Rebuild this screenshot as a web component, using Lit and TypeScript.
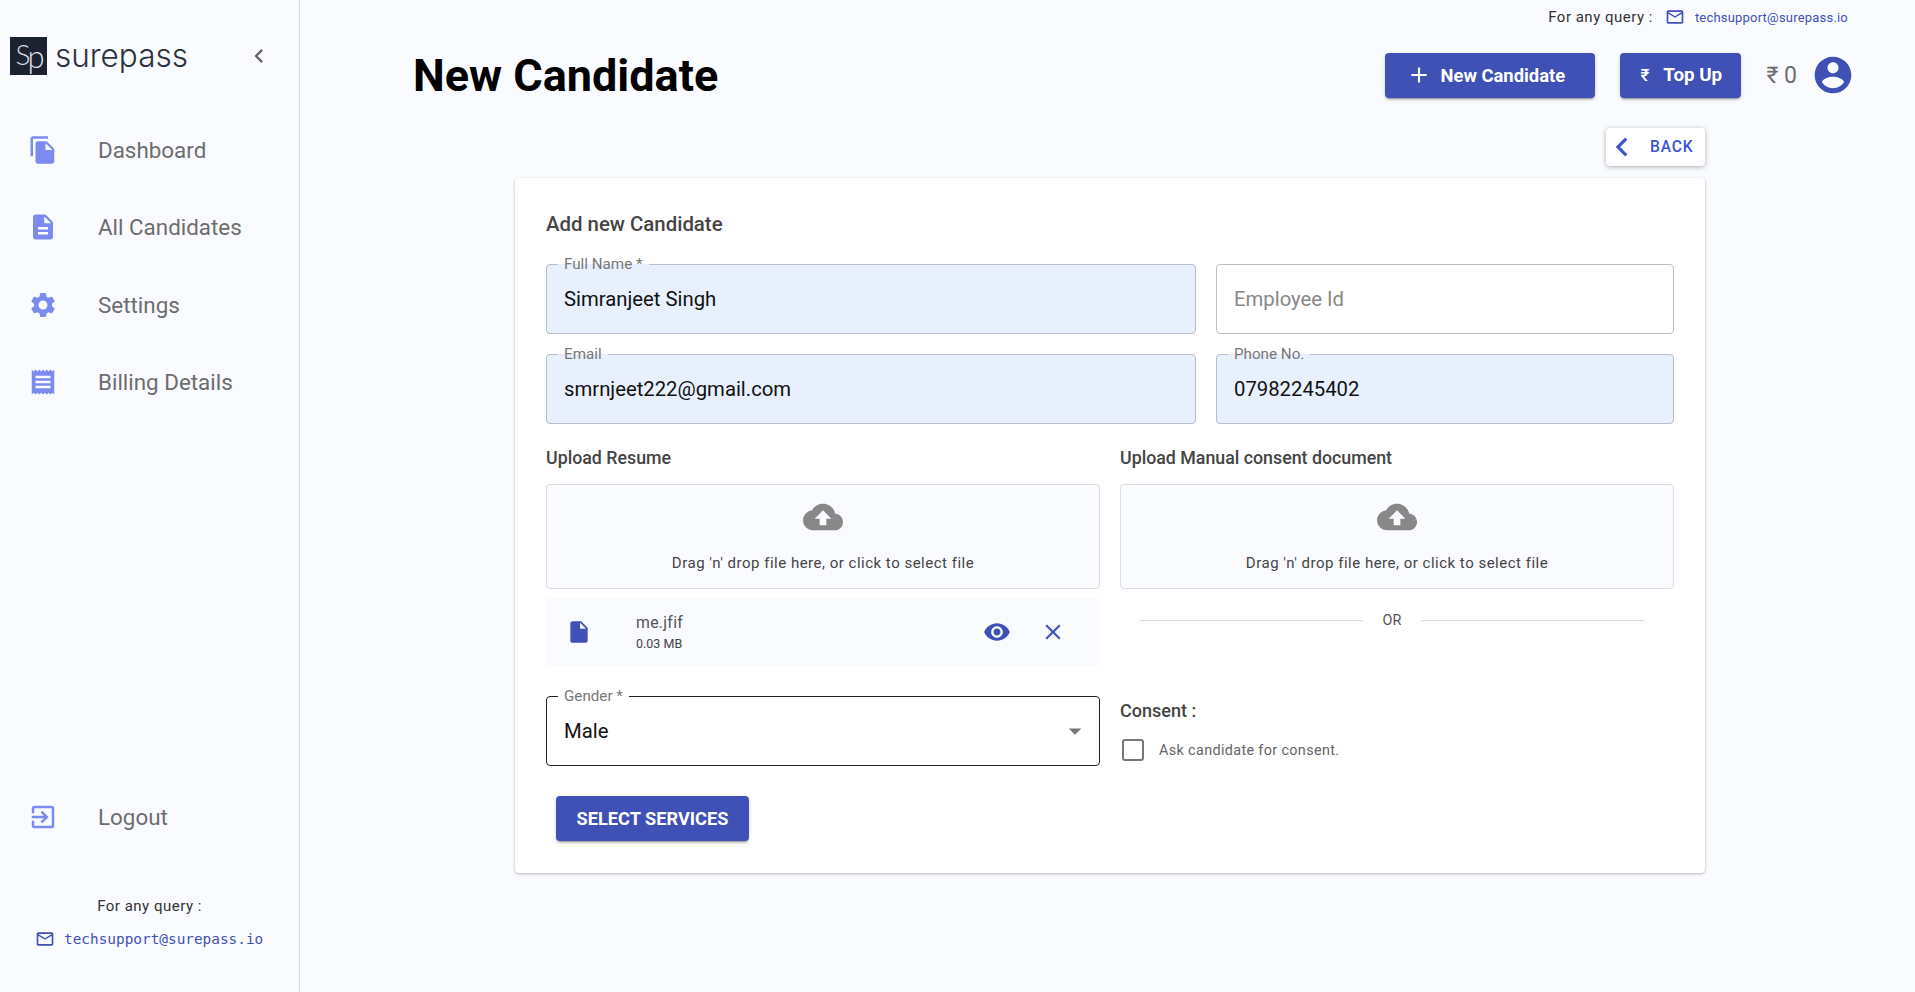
import { LitElement, html, css, svg } from "lit";
import { customElement } from "lit/decorators.js";

const P = {
  copy: "M16 1H4c-1.1 0-2 .9-2 2v14h2V3h12V1zm-1 4l6 6v10c0 1.1-.9 2-2 2H7.99C6.89 23 6 22.1 6 21l.01-14c0-1.1.89-2 1.99-2h7zm-1 7h5.5L14 6.5V12z",
  doc: "M14 2H6c-1.1 0-1.99.9-1.99 2L4 20c0 1.1.89 2 1.99 2H18c1.1 0 2-.9 2-2V8l-6-6zm2 16H8v-2h8v2zm0-4H8v-2h8v2zm-3-5V3.5L18.5 9H13z",
  gear: "M19.14 12.94c.04-.3.06-.61.06-.94 0-.32-.02-.64-.07-.94l2.03-1.58c.18-.14.23-.41.12-.61l-1.92-3.32c-.12-.22-.37-.29-.59-.22l-2.39.96c-.5-.38-1.03-.7-1.62-.94l-.36-2.54c-.04-.24-.24-.41-.48-.41h-3.84c-.24 0-.43.17-.47.41l-.36 2.54c-.59.24-1.13.57-1.62.94l-2.39-.96c-.22-.08-.47 0-.59.22L2.74 8.87c-.12.21-.08.47.12.61l2.03 1.58c-.05.3-.09.63-.09.94s.02.64.07.94l-2.03 1.58c-.18.14-.23.41-.12.61l1.92 3.32c.12.22.37.29.59.22l2.39-.96c.5.38 1.03.7 1.62.94l.36 2.54c.05.24.24.41.48.41h3.84c.24 0 .44-.17.47-.41l.36-2.54c.59-.24 1.13-.56 1.62-.94l2.39.96c.22.08.47 0 .59-.22l1.92-3.32c.12-.22.07-.47-.12-.61l-2.01-1.58zM12 15.6c-1.98 0-3.6-1.62-3.6-3.6s1.62-3.6 3.6-3.6 3.6 1.62 3.6 3.6-1.62 3.6-3.6 3.6z",
  receipt: "M18 17H6v-2h12v2zm0-4H6v-2h12v2zm0-4H6V7h12v2zM3 22l1.5-1.5L6 22l1.5-1.5L9 22l1.5-1.5L12 22l1.5-1.5L15 22l1.5-1.5L18 22l1.5-1.5L21 22V2l-1.5 1.5L18 2l-1.5 1.5L15 2l-1.5 1.5L12 2l-1.5 1.5L9 2 7.5 3.5 6 2 4.5 3.5 3 2v20z",
  logout: "M10.09 15.59L11.5 17l5-5-5-5-1.41 1.41L12.67 11H3v2h9.67l-2.58 2.59zM19 3H5c-1.11 0-2 .9-2 2v4h2V5h14v14H5v-4H3v4c0 1.1.89 2 2 2h14c1.1 0 2-.9 2-2V5c0-1.1-.9-2-2-2z",
  mail: "M22 6c0-1.1-.9-2-2-2H4c-1.1 0-2 .9-2 2v12c0 1.1.9 2 2 2h16c1.1 0 2-.9 2-2V6zm-2 0l-8 5-8-5h16zm0 12H4V8l8 5 8-5v10z",
  cloud: "M19.35 10.04C18.67 6.59 15.64 4 12 4 9.11 4 6.6 5.64 5.35 8.04 2.34 8.36 0 10.91 0 14c0 3.31 2.69 6 6 6h13c2.76 0 5-2.24 5-5 0-2.64-2.05-4.78-4.65-4.96zM14 13v4h-4v-4H7l5-5 5 5h-3z",
  file: "M6 2c-1.1 0-1.99.9-1.99 2L4 20c0 1.1.89 2 1.99 2H18c1.1 0 2-.9 2-2V8l-6-6H6zm7 7V3.5L18.5 9H13z",
  eye: "M12 4.5C7 4.5 2.73 7.61 1 12c1.73 4.39 6 7.5 11 7.5s9.27-3.11 11-7.5c-1.73-4.39-6-7.5-11-7.5zM12 17c-2.76 0-5-2.24-5-5s2.24-5 5-5 5 2.24 5 5-2.24 5-5 5zm0-8c-1.66 0-3 1.34-3 3s1.34 3 3 3 3-1.34 3-3-1.34-3-3-3z",
  close: "M19 6.41L17.59 5 12 10.59 6.41 5 5 6.41 10.59 12 5 17.59 6.41 19 12 13.41 17.59 19 19 17.59 13.41 12 19 6.41z",
  user: "M12 2C6.48 2 2 6.48 2 12s4.48 10 10 10 10-4.48 10-10S17.52 2 12 2zm0 3c1.66 0 3 1.34 3 3s-1.34 3-3 3-3-1.34-3-3 1.34-3 3-3zm0 14.2c-2.5 0-4.71-1.28-6-3.22.03-1.99 4-3.08 6-3.08 1.99 0 5.97 1.09 6 3.08-1.29 1.94-3.5 3.22-6 3.22z",
  left: "M15.41 7.41L14 6l-6 6 6 6 1.41-1.41L10.83 12z",
  plus: "M19 13h-6v6h-2v-6H5v-2h6V5h2v6h6v2z",
  drop: "M7 10l5 5 5-5z",
};

const icon = (d: string, size: number) =>
  html`<svg width=${size} height=${size} viewBox="0 0 24 24" fill="currentColor">${svg`<path d=${d}></path>`}</svg>`;

@customElement("app-root")
class AppRoot extends LitElement {
  static styles = css`
    :host {
      display: flex;
      height: 992px;
      overflow: hidden;
      background: #fafbff;
      font-family: Roboto, sans-serif;
      color: #444;
    }
    svg { display: block; flex: none; }

    /* sidebar */
    .side {
      width: 299px;
      flex: none;
      border-right: 1px solid #d8d9de;
      display: flex;
      flex-direction: column;
    }
    .brand {
      display: flex;
      align-items: center;
      padding: 37px 0 0 10px;
      height: 38px;
    }
    .mark {
      width: 37px;
      height: 38px;
      background: #1c2231;
      color: #dcdde0;
      font: 300 28px/34px Lato, sans-serif;
      letter-spacing: -3px;
      text-align: center;
      overflow: hidden;
    }
    .mark span { font-size: 31px; vertical-align: -3px; }
    .word {
      margin-left: 8px;
      font: 300 31.5px/38px Inter, sans-serif;
      color: #2c3140;
      width: 199px;
    }
    .collapse { color: #666; margin-left: -9px; }
    .nav { margin-top: 36px; }
    .item {
      height: 77.5px;
      display: flex;
      align-items: center;
      padding-left: 28px;
      gap: 40px;
      font-size: 22.4px;
      color: #6d6d6d;
    }
    .item svg { color: #7c8bef; }
    .grow { flex: 1; }
    .logout { margin-bottom: 40px; }
    .ask {
      text-align: center;
      font-size: 15px;
      line-height: 20px;
      color: #333;
      letter-spacing: 0.5px;
    }
    .ask-mail {
      display: flex;
      align-items: center;
      gap: 9px;
      margin: 13px 0 43px 35px;
      color: #3f51b5;
      font: 14.4px/20px "DejaVu Sans Mono", monospace;
    }

    /* main column */
    .main { flex: 1; min-width: 0; display: flex; flex-direction: column; }
    .query {
      display: flex;
      justify-content: flex-end;
      align-items: center;
      height: 20px;
      margin-top: 7px;
      padding-right: 67px;
      font-size: 15px;
      color: #333;
      letter-spacing: 0.5px;
    }
    .query svg { color: #3f51b5; margin: 0 10px 0 12px; }
    .query a { color: #3f51b5; font-size: 13px; letter-spacing: 0.2px; }
    .head {
      display: flex;
      align-items: center;
      height: 46px;
      margin-top: 25px;
      padding: 0 60px 0 113px;
    }
    h1 {
      margin: 0;
      flex: 1;
      font-size: 45px;
      font-weight: 700;
      color: #000;
    }
    .btn {
      display: flex;
      align-items: center;
      height: 45px;
      border: 0;
      border-radius: 4px;
      background: #3f51b5;
      color: #fff;
      font: 700 18.4px Roboto, sans-serif;
      box-shadow: 0 3px 1px -2px rgba(0,0,0,.2), 0 2px 2px rgba(0,0,0,.14), 0 1px 5px rgba(0,0,0,.12);
    }
    .btn.add { width: 210px; padding: 0 0 0 21px; gap: 8px; margin-right: 25px; }
    .btn.top { width: 121px; padding: 0 0 0 20px; gap: 14px; margin-right: 25px; font-size: 18.8px; }
    .rupee { font-weight: 500; font-size: 17px; }
    .bal { font-size: 23px; color: #6d6d6d; margin-right: 14px; }
    .avatar { color: #3f51b5; }

    .back-row { display: flex; justify-content: flex-end; margin: 30px 210px 0 0; }
    .back {
      display: flex;
      align-items: center;
      height: 38px;
      width: 99px;
      gap: 9px;
      background: #fff;
      border-radius: 4px;
      color: #3d52d5;
      font-size: 15.6px;
      font-weight: 500;
      letter-spacing: 0.8px;
      box-shadow: 0 1px 5px rgba(0,0,0,.3);
    }
    .back svg { margin-left: -3px; }

    /* form card */
    .card {
      width: 1128px;
      margin: 12px 0 0 215px;
      padding: 34px 31px 32px;
      background: #fff;
      border-radius: 4px;
      box-shadow: 0 1px 3px rgba(0,0,0,.28);
    }
    h2 {
      margin: 0 0 21px;
      font-size: 20.4px;
      line-height: 24px;
      font-weight: 500;
      color: #444;
    }
    .row { display: grid; grid-template-columns: 650px 458px; gap: 13px 20px; }
    fieldset {
      margin: 0;
      padding: 0 17px;
      height: 77px;
      box-sizing: border-box;
      border: 1px solid #b9bfc9;
      border-radius: 4px;
      min-width: 0;
      background: #e8f0fe;
      display: block;
    }
    fieldset.plain { background: #fff; }
    fieldset.dark { border-color: #222; background: #fff; }
    legend {
      padding: 0 6px;
      margin-left: -6px;
      font-size: 15.2px;
      line-height: 14px;
      color: #777;
    }
    legend.none { padding: 0; width: 0; overflow: hidden; }
    .value {
      font-size: 20.3px;
      line-height: 24px;
      margin-top: 16px;
      color: #111;
    }
    .value.ph { color: #888; }
    .select { display: flex; align-items: center; justify-content: space-between; padding-top: 13px; }
    .select .value { margin-top: 0; }
    .select svg { color: #777; margin-right: -8px; }

    .uploads {
      display: grid;
      grid-template-columns: 554px 554px;
      gap: 0 20px;
      margin-top: 20px;
    }
    .lab { font-size: 17.8px; line-height: 28px; font-weight: 500; color: #444; }
    .zone {
      margin-top: 12px;
      height: 105px;
      box-sizing: border-box;
      border: 1px solid #dcdde1;
      border-radius: 4px;
      background: #fafbff;
      display: flex;
      flex-direction: column;
      align-items: center;
      padding-top: 12px;
      color: #444;
      font-size: 15px;
      letter-spacing: 0.5px;
    }
    .zone svg { color: #888; margin-bottom: 17px; }
    .file {
      margin-top: 9px;
      height: 68px;
      background: #fafbff;
      display: flex;
      align-items: center;
      padding-left: 20px;
      color: #3f51b5;
    }
    .file-name { margin-left: 44px; flex: 1; color: #555; font-size: 15.8px; letter-spacing: 0.3px; }
    .file-name small { display: block; font-size: 12.5px; margin-top: 4px; color: #444; letter-spacing: 0; }
    .file .eye { margin-right: 29px; }
    .file .x { margin-right: 34px; }
    .or {
      margin: 14px 29px 0 19px;
      height: 34px;
      display: flex;
      align-items: center;
      gap: 20px;
      font-size: 14.4px;
      color: #555;
    }
    .or i { flex: 1; height: 1px; background: #ddd; }
    .bottom {
      display: grid;
      grid-template-columns: 554px 554px;
      gap: 0 20px;
      margin-top: 23px;
    }
    .consent-lab { font-size: 18px; font-weight: 500; line-height: 24px; margin-top: 10px; color: #444; }
    .check { display: flex; align-items: center; gap: 15px; margin-top: 16px; padding-left: 2px; font-size: 14.4px; color: #666; letter-spacing: 0.35px; }
    .box { width: 18px; height: 18px; border: 2px solid #777; border-radius: 3px; }
    .btn.go {
      margin: 30px 0 0 10px;
      width: 193px;
      justify-content: center;
      font-size: 18.2px;
    }
  `;

  private nav = [
    ["Dashboard", P.copy],
    ["All Candidates", P.doc],
    ["Settings", P.gear],
    ["Billing Details", P.receipt],
  ];

  private zone() {
    return html`<div class="zone">${icon(P.cloud, 40)}<span>Drag 'n' drop file here, or click to select file</span></div>`;
  }

  private field(label: string, value: string) {
    return html`<fieldset><legend>${label}</legend><div class="value">${value}</div></fieldset>`;
  }

  render() {
    return html`
      <aside class="side">
        <div class="brand">
          <div class="mark">S<span>p</span></div>
          <div class="word">surepass</div>
          <span class="collapse">${icon(P.left, 28)}</span>
        </div>
        <nav class="nav">
          ${this.nav.map(([t, d]) => html`<div class="item">${icon(d, 30)}<span>${t}</span></div>`)}
        </nav>
        <div class="grow"></div>
        <div class="item logout">${icon(P.logout, 30)}<span>Logout</span></div>
        <div class="ask">For any query :</div>
        <div class="ask-mail">${icon(P.mail, 20)}<span>techsupport@surepass.io</span></div>
      </aside>
      <div class="main">
        <div class="query">
          <span>For any query :</span>${icon(P.mail, 20)}<a>techsupport@surepass.io</a>
        </div>
        <header class="head">
          <h1>New Candidate</h1>
          <button class="btn add">${icon(P.plus, 26)}New Candidate</button>
          <button class="btn top"><span class="rupee">₹</span>Top Up</button>
          <span class="bal">₹ 0</span>
          <span class="avatar">${icon(P.user, 44)}</span>
        </header>
        <div class="back-row">
          <div class="back">${icon(P.left, 38)}<span>BACK</span></div>
        </div>
        <section class="card">
          <h2>Add new Candidate</h2>
          <div class="row">
            ${this.field("Full Name *", "Simranjeet Singh")}
            <fieldset class="plain"><legend class="none">&nbsp;</legend><div class="value ph">Employee Id</div></fieldset>
            ${this.field("Email", "smrnjeet222@gmail.com")}
            ${this.field("Phone No.", "07982245402")}
          </div>
          <div class="uploads">
            <div>
              <div class="lab">Upload Resume</div>
              ${this.zone()}
              <div class="file">
                ${icon(P.file, 26)}
                <div class="file-name">me.jfif<small>0.03 MB</small></div>
                <span class="eye">${icon(P.eye, 28)}</span>
                <span class="x">${icon(P.close, 26)}</span>
              </div>
            </div>
            <div>
              <div class="lab">Upload Manual consent document</div>
              ${this.zone()}
              <div class="or"><i></i><span>OR</span><i></i></div>
            </div>
          </div>
          <div class="bottom">
            <fieldset class="dark">
              <legend>Gender *</legend>
              <div class="select"><div class="value">Male</div>${icon(P.drop, 30)}</div>
            </fieldset>
            <div>
              <div class="consent-lab">Consent :</div>
              <div class="check"><span class="box"></span><span>Ask candidate for consent.</span></div>
            </div>
          </div>
          <button class="btn go">SELECT SERVICES</button>
        </section>
      </div>
    `;
  }
}
